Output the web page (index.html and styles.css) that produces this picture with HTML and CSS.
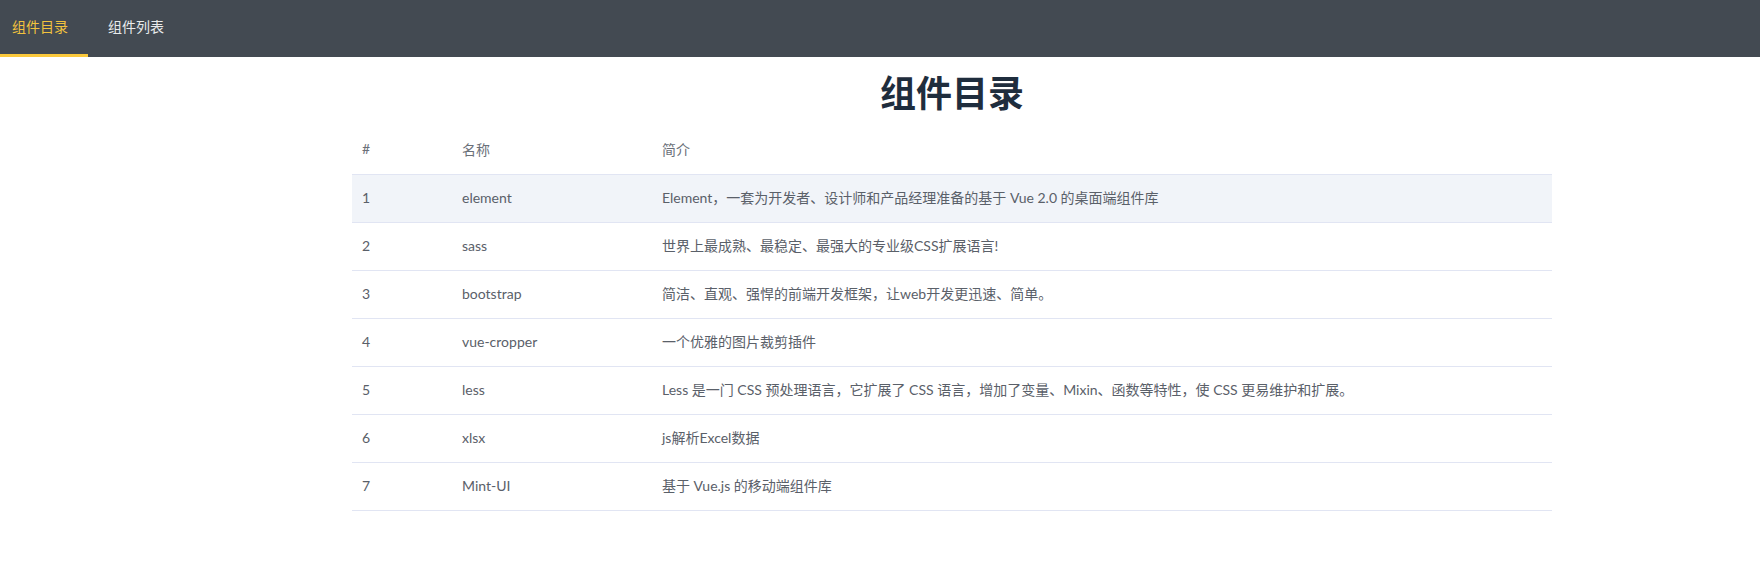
FILE: index.html
```html
<!DOCTYPE html>
<html lang="zh-CN">
<head>
<meta charset="utf-8">
<title>组件目录</title>
<link rel="stylesheet" href="styles.css">
</head>
<body>
<nav class="nav">
  <a class="tab active">组件目录</a>
  <a class="tab">组件列表</a>
</nav>
<main class="main">
  <div class="content">
    <h1 class="title">组件目录</h1>
    <table class="table">
      <colgroup><col class="c1"><col class="c2"><col class="c3"></colgroup>
      <thead>
        <tr><th>#</th><th>名称</th><th>简介</th></tr>
      </thead>
      <tbody>
        <tr class="hl"><td>1</td><td>element</td><td>Element，一套为开发者、设计师和产品经理准备的基于 Vue 2.0 的桌面端组件库</td></tr>
        <tr><td>2</td><td>sass</td><td>世界上最成熟、最稳定、最强大的专业级CSS扩展语言!</td></tr>
        <tr><td>3</td><td>bootstrap</td><td>简洁、直观、强悍的前端开发框架，让web开发更迅速、简单。</td></tr>
        <tr><td>4</td><td>vue-cropper</td><td>一个优雅的图片裁剪插件</td></tr>
        <tr><td>5</td><td>less</td><td>Less 是一门 CSS 预处理语言，它扩展了 CSS 语言，增加了变量、Mixin、函数等特性，使 CSS 更易维护和扩展。</td></tr>
        <tr><td>6</td><td>xlsx</td><td>js解析Excel数据</td></tr>
        <tr><td>7</td><td>Mint-UI</td><td>基于 Vue.js 的移动端组件库</td></tr>
      </tbody>
    </table>
  </div>
</main>
</body>
</html>
```
FILE: styles.css
```css
* { box-sizing: border-box; }
html, body { margin: 0; padding: 0; background: #fff; }
body {
  font-family: Lato, "Noto Sans CJK SC", sans-serif;
  font-size: 14px;
  color: #5e6670;
}
.nav {
  display: flex;
  height: 57px;
  background: #434a52;
}
.tab {
  display: flex;
  align-items: center;
  padding: 0 20px 2px;
  height: 57px;
  color: #e8eaec;
  font-size: 14px;
  border-bottom: 3px solid transparent;
}
.tab:first-child { padding-left: 12px; }
.tab.active {
  color: #f2c23e;
  border-bottom-color: #fbc93c;
}
.main { padding-left: 144px; }
.content { width: 1200px; margin: 0 auto; }
.title {
  margin: 12px 0 9px;
  text-align: center;
  font-size: 36px;
  line-height: 48px;
  font-weight: 700;
  color: #1f2d3d;
}
.table {
  width: 100%;
  border-collapse: collapse;
  table-layout: fixed;
}
.c1 { width: 100px; }
.c2 { width: 200px; }
.table th, .table td {
  height: 48px;
  padding: 0 10px 2px;
  text-align: left;
  font-weight: 400;
  vertical-align: middle;
  white-space: nowrap;
}
.table th { color: #6b7079; font-size: 14px; }
.table td { color: #5a6069; border-top: 1px solid #e1e5f3; }
.table tbody tr:last-child td { border-bottom: 1px solid #e1e5f3; }
.table tr.hl td { background: #f1f4f9; }
```
